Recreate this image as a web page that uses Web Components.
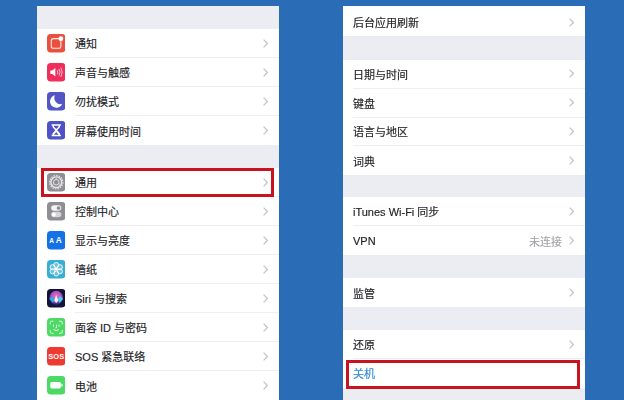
<!DOCTYPE html>
<html lang="zh">
<head>
<meta charset="utf-8">
<title>设置</title>
<style>
  html, body { margin: 0; height: 100%; background: #2a6cb5; overflow: hidden; }
  body { font-family: "Liberation Sans", "Noto Sans CJK SC", sans-serif; }
</style>
</head>
<body>
<settings-screen>
  <settings-panel>
    <settings-gap size="23"></settings-gap>
    <settings-group>
      <settings-row icon="notify">通知</settings-row>
      <settings-row icon="sound">声音与触感</settings-row>
      <settings-row icon="moon">勿扰模式</settings-row>
      <settings-row icon="hourglass">屏幕使用时间</settings-row>
    </settings-group>
    <settings-gap size="23"></settings-gap>
    <settings-group>
      <settings-row icon="gear" marked>通用</settings-row>
      <settings-row icon="control">控制中心</settings-row>
      <settings-row icon="display">显示与亮度</settings-row>
      <settings-row icon="flower">墙纸</settings-row>
      <settings-row icon="siri">Siri 与搜索</settings-row>
      <settings-row icon="face">面容 ID 与密码</settings-row>
      <settings-row icon="sos">SOS 紧急联络</settings-row>
      <settings-row icon="battery">电池</settings-row>
    </settings-group>
  </settings-panel>
  <settings-panel>
    <settings-group>
      <settings-row style="--row-height: 30px; --label-top: 2px">后台应用刷新</settings-row>
    </settings-group>
    <settings-gap size="24"></settings-gap>
    <settings-group style="--row-height: 28.75px">
      <settings-row>日期与时间</settings-row>
      <settings-row>键盘</settings-row>
      <settings-row>语言与地区</settings-row>
      <settings-row>词典</settings-row>
    </settings-group>
    <settings-gap size="22"></settings-gap>
    <settings-group>
      <settings-row>iTunes Wi-Fi 同步</settings-row>
      <settings-row value="未连接">VPN</settings-row>
    </settings-group>
    <settings-gap size="23"></settings-gap>
    <settings-group>
      <settings-row>监管</settings-row>
    </settings-group>
    <settings-gap size="23"></settings-gap>
    <settings-group>
      <settings-row>还原</settings-row>
      <settings-row action marked style="--label-bottom: 2px; --mark-left: 3px; --mark-top: 1px">关机</settings-row>
    </settings-group>
  </settings-panel>
</settings-screen>

<script>
  const ICONS = {
    notify: `<rect width="20" height="20" rx="4" fill="#e9503e"/>
      <rect x="4.6" y="5" width="10.4" height="10.4" rx="2.2" fill="none" stroke="#fff" stroke-width="1.1" opacity=".9"/>
      <circle cx="15" cy="5" r="2.6" fill="#fff"/>`,
    sound: `<rect width="20" height="20" rx="4" fill="#f02d5b"/>
      <path d="M3.6 8h2.2l3.2-2.6v9.2L5.8 12H3.6z" fill="#fff"/>
      <path d="M11 7.8q1.2 2.2 0 4.4M13 6.400q2 3.600 0 7.200M15 5q2.800 5 0 10" fill="none" stroke="#fff" stroke-width=".9" opacity=".85"/>`,
    moon: `<rect width="20" height="20" rx="4" fill="#5354c6"/>
      <path d="M8.600 3.600a6.800 6.800 0 1 0 7.800 9.200A6.600 6.600 0 0 1 8.600 3.600z" fill="#fff"/>`,
    hourglass: `<rect width="20" height="20" rx="4" fill="#4f52c4"/>
      <path d="M5 3.500h10v1.600h-1v1.600L11 10l3 3.300v1.600h1v1.600H5v-1.600h1v-1.600L9 10 6 6.700V5.100H5z" fill="#fff"/>
      <path d="M7.600 5.100h4.800v1L10 8.600 7.600 6.100zM10 12l2.400 2.900H7.600z" fill="#4f52c4"/>`,
    gear: `<rect width="20" height="20" rx="4" fill="#8e8e93"/>
      <circle cx="10" cy="10" r="7.200" fill="none" stroke="#e8e8ea" stroke-width="1.300" stroke-dasharray="1.500 1.300"/>
      <circle cx="10" cy="10" r="5.800" fill="none" stroke="#e8e8ea" stroke-width="1.500"/>
      <circle cx="10" cy="10" r="3" fill="none" stroke="#e8e8ea" stroke-width="1"/>
      <path d="M10 5.500V7M6.100 12.300l1.300-.8M13.900 12.300l-1.300-.8" stroke="#e8e8ea" stroke-width=".9"/>`,
    control: `<rect width="20" height="20" rx="4" fill="#8e8e93"/>
      <rect x="4.500" y="3.500" width="11" height="6" rx="3" fill="#f4f4f5"/>
      <circle cx="12.500" cy="6.500" r="2" fill="#8e8e93"/>
      <rect x="4.500" y="10.500" width="11" height="6" rx="3" fill="#d6d6d9"/>
      <circle cx="7.500" cy="13.500" r="2.100" fill="#fff"/>`,
    display: `<rect width="20" height="20" rx="4" fill="#1472e6"/>
      <text x="2.500" y="13" font-family="Liberation Sans" font-size="7" font-weight="700" fill="#fff">A</text>
      <text x="9.500" y="13.500" font-family="Liberation Sans" font-size="9" font-weight="700" fill="#fff">A</text>`,
    flower: `<rect width="20" height="20" rx="4" fill="#3aaed2"/>
      <g fill="#fff" fill-opacity=".25" stroke="#fff" stroke-width=".9">
        <circle cx="10" cy="5.400" r="2.700"/><circle cx="10" cy="14.600" r="2.700"/>
        <circle cx="6" cy="7.700" r="2.700"/><circle cx="14" cy="7.700" r="2.700"/>
        <circle cx="6" cy="12.300" r="2.700"/><circle cx="14" cy="12.300" r="2.700"/>
      </g>
      <circle cx="10" cy="10" r="1.600" fill="#fff"/>`,
    siri: `<defs>
        <radialGradient id="siriTop" cx=".5" cy=".4" r=".55">
          <stop offset="0" stop-color="#ff6fb0"/><stop offset=".7" stop-color="#a24fc4"/><stop offset="1" stop-color="#2b2f78"/>
        </radialGradient>
      </defs>
      <rect width="20" height="20" rx="4" fill="#14143a"/>
      <circle cx="10" cy="9.500" r="7.500" fill="url(#siriTop)"/>
      <path d="M2.500 10.500 6 7.500l2.200 3.500L6.500 15z" fill="#37a5e8"/>
      <path d="M17.500 10.500 14 7.500 11.800 11l1.700 4z" fill="#45d0e0"/>
      <path d="M7.800 12.500 10 6.500l2.200 6-2.200 2.500z" fill="#f6eeff"/>`,
    face: `<rect width="20" height="20" rx="4" fill="#4cd964"/>
      <path d="M3.500 7V5q0-1.500 1.500-1.500h2M13 3.500h2q1.500 0 1.500 1.500v2M16.500 13v2q0 1.500-1.500 1.500h-2M7 16.500H5q-1.500 0-1.500-1.500v-2" fill="none" stroke="#fff" stroke-width=".9"/>
      <path d="M7 7.500v1.500M13 7.500v1.500M10.300 7.500v3.200H9.500M7.500 12.800q2.500 1.800 5 0" fill="none" stroke="#fff" stroke-width=".9" stroke-linecap="round"/>`,
    sos: `<rect width="20" height="20" rx="4" fill="#ee3a30"/>
      <text x="10" y="13" text-anchor="middle" font-family="Liberation Sans" font-size="8" font-weight="700" fill="#fff" textLength="17" lengthAdjust="spacingAndGlyphs">SOS</text>`,
    battery: `<rect width="20" height="20" rx="4" fill="#4cd964"/>
      <rect x="3.500" y="6.500" width="11.500" height="7" rx="1.500" fill="#fff"/>
      <rect x="15.500" y="8.500" width="1.300" height="3" rx=".6" fill="#fff"/>`,
  };

  class SettingsScreen extends HTMLElement {
    constructor() {
      super();
      this.attachShadow({ mode: "open" }).innerHTML = `
        <style>
          :host {
            display: flex;
            gap: 64px;
            padding: 6px 0 0 37px;
            height: 394px;
            filter: blur(0.5px);
          }
        </style>
        <slot></slot>`;
    }
  }

  class SettingsPanel extends HTMLElement {
    constructor() {
      super();
      this.attachShadow({ mode: "open" }).innerHTML = `
        <style>
          :host {
            display: flex;
            flex-direction: column;
            width: 242px;
            overflow: hidden;
            background: #ecedf2;
          }
        </style>
        <slot></slot>`;
    }
  }

  class SettingsGap extends HTMLElement {
    constructor() {
      super();
      this.attachShadow({ mode: "open" }).innerHTML = `
        <style>
          :host { display: block; flex: none; height: var(--gap, 23px); }
        </style>`;
    }
    connectedCallback() {
      this.style.setProperty("--gap", this.getAttribute("size") + "px");
    }
  }

  class SettingsGroup extends HTMLElement {
    constructor() {
      super();
      this.attachShadow({ mode: "open" }).innerHTML = `
        <style>
          :host { display: block; flex: none; background: #fff; }
        </style>
        <slot></slot>`;
    }
  }

  class SettingsRow extends HTMLElement {
    constructor() {
      super();
      this.attachShadow({ mode: "open" }).innerHTML = `
        <style>
          :host {
            display: flex;
            align-items: stretch;
            position: relative;
            height: var(--row-height, 29px);
            padding-left: 10px;
            font-size: 11px;
            color: #222226;
            -webkit-text-stroke: 0.15px currentColor;
          }
          :host([action]) { color: #2f8bd8; }
          .icon {
            flex: none;
            align-self: center;
            width: 18.5px;
            height: 18.5px;
            margin-right: 10px;
            margin-left: -0.500px;
          }
          .body {
            flex: 1;
            display: flex;
            align-items: center;
            box-sizing: border-box;
            padding: var(--label-top, 0) 11px var(--label-bottom, 0) 0;
          }
          :host(:not(:last-child)) .body { border-bottom: 1px solid #eeeef1; }
          .label { flex: 1; white-space: nowrap; }
          .value { color: #a3a3a8; margin-right: 7px; }
          .value:empty { display: none; }
          .chevron { width: 5px; height: 9px; flex: none; }
          :host([action]) .chevron { display: none; }
          .mark {
            display: none;
            position: absolute;
            top: var(--mark-top, 0);
            left: var(--mark-left, 4px);
            right: 5px;
            height: 100%;
            border: 3px solid #c8141e;
            box-sizing: border-box;
          }
          :host([marked]) .mark { display: block; }
        </style>
        <svg class="icon" viewBox="0 0 20 20"></svg>
        <div class="body">
          <span class="label"><slot></slot></span>
          <span class="value"></span>
          <svg class="chevron" viewBox="0 0 5 9"><path d="M.6.6 4.300 4.500.6 8.400" fill="none" stroke="#c4c4c8" stroke-width="1.200"/></svg>
        </div>
        <div class="mark"></div>`;
    }
    connectedCallback() {
      const icon = this.shadowRoot.querySelector(".icon");
      const name = this.getAttribute("icon");
      if (name) icon.innerHTML = ICONS[name];
      else icon.remove();
      this.shadowRoot.querySelector(".value").textContent = this.getAttribute("value") || "";
    }
  }

  customElements.define("settings-screen", SettingsScreen);
  customElements.define("settings-panel", SettingsPanel);
  customElements.define("settings-gap", SettingsGap);
  customElements.define("settings-group", SettingsGroup);
  customElements.define("settings-row", SettingsRow);
</script>
</body>
</html>
